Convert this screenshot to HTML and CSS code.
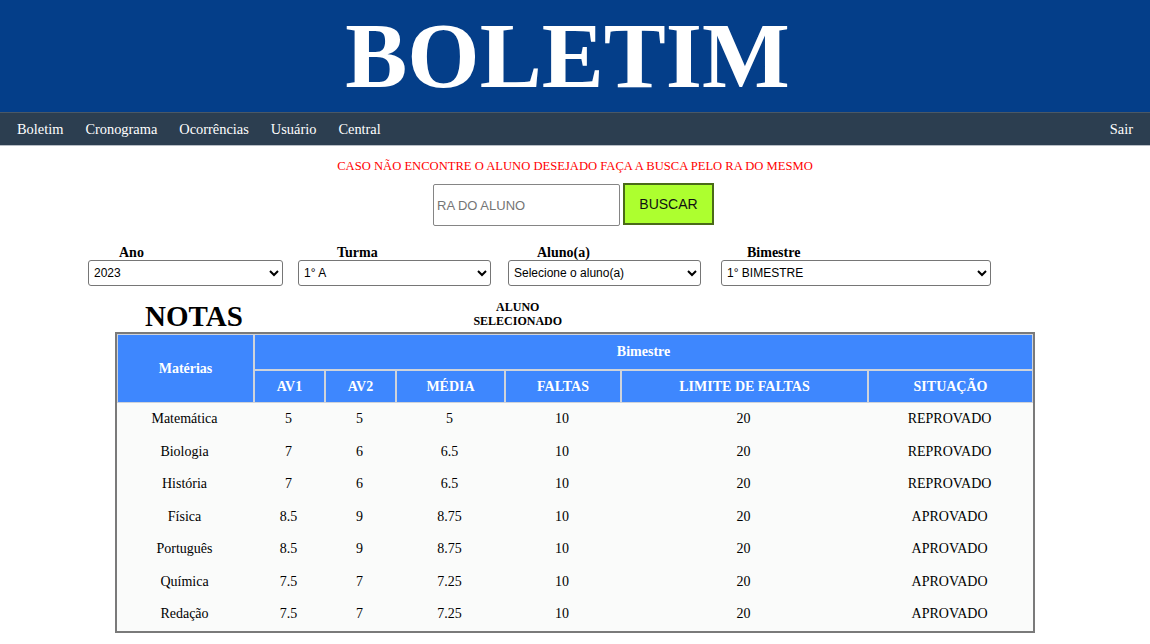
FILE: index.html
```html
<!DOCTYPE html>
<html lang="pt-BR">
<head>
<meta charset="utf-8">
<title>Boletim</title>
<link rel="stylesheet" href="styles.css">
</head>
<body>
<header class="topo">
  <h1 class="titulo">BOLETIM</h1>
</header>
<nav class="menu">
  <div class="menu-links">
    <a href="#">Boletim</a>
    <a href="#">Cronograma</a>
    <a href="#">Ocorrências</a>
    <a href="#">Usuário</a>
    <a href="#">Central</a>
  </div>
  <a href="#" class="sair">Sair</a>
</nav>
<p class="aviso">CASO NÃO ENCONTRE O ALUNO DESEJADO FAÇA A BUSCA PELO RA DO MESMO</p>
<div class="busca">
  <input class="ra" type="text" placeholder="RA DO ALUNO">
  <button class="buscar">BUSCAR</button>
</div>
<div class="filtros">
  <div class="grupo g-ano">
    <label class="rotulo">Ano</label>
    <select class="sel"><option>2023</option></select>
  </div>
  <div class="grupo g-turma">
    <label class="rotulo">Turma</label>
    <select class="sel"><option>1° A</option></select>
  </div>
  <div class="grupo g-aluno">
    <label class="rotulo">Aluno(a)</label>
    <select class="sel"><option>Selecione o aluno(a)</option></select>
  </div>
  <div class="grupo g-bim">
    <label class="rotulo">Bimestre</label>
    <select class="sel"><option>1° BIMESTRE</option></select>
  </div>
</div>
<section class="notas">
  <div class="notas-topo">
    <h2 class="notas-titulo">NOTAS</h2>
    <div class="aluno-sel">ALUNO<br>SELECIONADO</div>
  </div>
  <table class="tabela">
    <colgroup>
      <col class="c-mat"><col class="c-av"><col class="c-av"><col class="c-med"><col class="c-fal"><col class="c-lim"><col class="c-sit">
    </colgroup>
    <thead>
      <tr class="h1row"><th rowspan="2">Matérias</th><th colspan="6">Bimestre</th></tr>
      <tr class="h2row"><th>AV1</th><th>AV2</th><th>MÉDIA</th><th>FALTAS</th><th>LIMITE DE FALTAS</th><th>SITUAÇÃO</th></tr>
    </thead>
    <tbody>
      <tr><td>Matemática</td><td>5</td><td>5</td><td>5</td><td>10</td><td>20</td><td>REPROVADO</td></tr>
      <tr><td>Biologia</td><td>7</td><td>6</td><td>6.5</td><td>10</td><td>20</td><td>REPROVADO</td></tr>
      <tr><td>História</td><td>7</td><td>6</td><td>6.5</td><td>10</td><td>20</td><td>REPROVADO</td></tr>
      <tr><td>Física</td><td>8.5</td><td>9</td><td>8.75</td><td>10</td><td>20</td><td>APROVADO</td></tr>
      <tr><td>Português</td><td>8.5</td><td>9</td><td>8.75</td><td>10</td><td>20</td><td>APROVADO</td></tr>
      <tr><td>Química</td><td>7.5</td><td>7</td><td>7.25</td><td>10</td><td>20</td><td>APROVADO</td></tr>
      <tr><td>Redação</td><td>7.5</td><td>7</td><td>7.25</td><td>10</td><td>20</td><td>APROVADO</td></tr>
    </tbody>
  </table>
</section>
</body>
</html>
```
FILE: styles.css
```css
* { box-sizing: border-box; }
body {
  margin: 0;
  font-family: "Liberation Serif", "Times New Roman", serif;
  background: #ffffff;
  color: #000;
}
.topo {
  background: #043e89;
  height: 112px;
  display: flex;
  align-items: center;
  justify-content: center;
}
.titulo {
  margin: 0;
  padding-right: 15px;
  padding-bottom: 2px;
  font-size: 93px;
  font-weight: bold;
  color: #ffffff;
  line-height: 1;
}
.menu {
  background: #2c3e50;
  height: 34px;
  display: flex;
  align-items: center;
  justify-content: space-between;
  padding: 0 17px;
  border-top: 1px solid #4a5866;
  border-bottom: 1px solid #b8bec6;
}
.menu-links { display: flex; gap: 22px; }
.menu a {
  color: #ffffff;
  text-decoration: none;
  font-size: 14.4px;
}
.aviso {
  margin: 12px 0 0;
  text-align: center;
  color: #ff0000;
  font-size: 12.6px;
  line-height: 16px;
}
.busca {
  display: flex;
  justify-content: center;
  align-items: flex-start;
  gap: 3px;
  margin-top: 9px;
  padding-right: 3px;
}
.ra {
  width: 187px;
  height: 42px;
  margin-top: 1px;
  border: 1px solid #858585;
  border-radius: 2px;
  padding: 0 3px;
  font-family: "Liberation Sans", Arial, sans-serif;
  font-size: 13px;
}
.ra::placeholder { color: #757575; }
.buscar {
  width: 91px;
  height: 42px;
  background: #adff2f;
  border: 2px solid #4a6a18;
  font-family: "Liberation Sans", Arial, sans-serif;
  font-size: 14px;
  color: #111;
}
.filtros {
  display: flex;
  padding-left: 88px;
  margin-top: 20px;
}
.grupo { display: flex; flex-direction: column; }
.rotulo {
  font-weight: bold;
  font-size: 14px;
  line-height: 14px;
}
.sel {
  height: 26px;
  border: 1px solid #767676;
  border-radius: 3px;
  background: #fff;
  font-family: "Liberation Sans", Arial, sans-serif;
  font-size: 12px;
  color: #000;
  padding: 0 0 0 1px;
}
.g-ano .sel { width: 195px; }
.g-ano .rotulo { padding-left: 31px; }
.g-turma { margin-left: 15px; }
.g-turma .sel { width: 193px; }
.g-turma .rotulo { padding-left: 39px; }
.g-aluno { margin-left: 17px; }
.g-aluno .sel { width: 193px; }
.g-aluno .rotulo { padding-left: 29px; }
.g-bim { margin-left: 20px; }
.g-bim .sel { width: 270px; }
.g-bim .rotulo { padding-left: 26px; }
.notas {
  width: 920px;
  margin: 14px auto 0;
}
.notas-topo {
  display: flex;
  align-items: flex-start;
  height: 32px;
}
.notas-titulo {
  margin: 0 0 0 30px;
  font-size: 29px;
  line-height: 33px;
  font-weight: bold;
}
.aluno-sel {
  margin-left: 215px;
  width: 120px;
  text-align: center;
  font-weight: bold;
  font-size: 12px;
  line-height: 14px;
}
.tabela {
  width: 920px;
  border-collapse: separate;
  border-spacing: 0;
  border: 2px solid #7a7a7a;
  background: #fafbfa;
  table-layout: fixed;
}
.c-mat { width: 137px; }
.c-av { width: 71px; }
.c-med { width: 109px; }
.c-fal { width: 116px; }
.c-lim { width: 247px; }
.c-sit { width: 165px; }
.tabela th {
  background: #3e87fe;
  color: #ffffff;
  font-size: 14px;
  font-weight: bold;
  border: 1px solid #cfd3da;
  padding: 0;
}
.h1row th { height: 36px; }
.h2row th { height: 33px; }
.tabela td {
  text-align: center;
  font-size: 14px;
  height: 32.5px;
  padding: 0 2px 0 0;
}
```
